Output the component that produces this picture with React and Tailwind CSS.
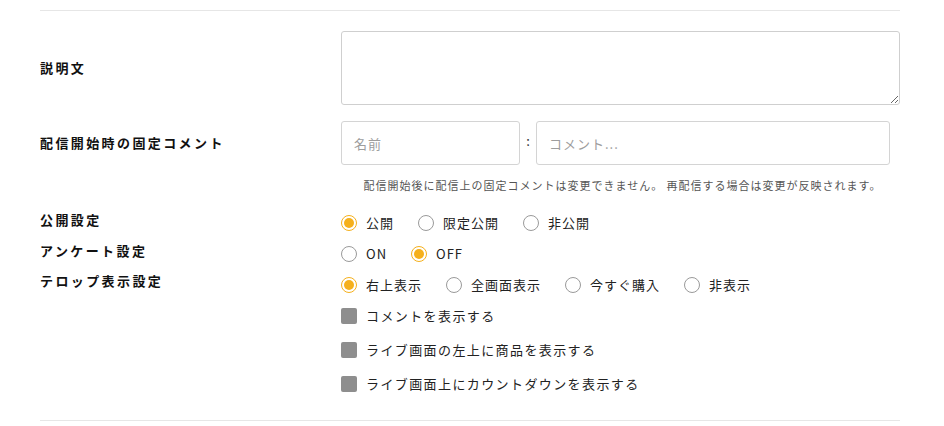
import React from "react";

const font = { fontFamily: '"Noto Sans CJK JP", "Noto Sans", sans-serif' };

const Radio = ({ label, checked }) => (
  <label className="flex items-center mr-[24px]">
    <span
      className={
        checked
          ? "w-4 h-4 rounded-full border border-[#f5b01c] flex items-center justify-center"
          : "w-4 h-4 rounded-full border border-[#9a9a9a]"
      }
    >
      {checked && <span className="w-[10px] h-[10px] rounded-full bg-[#f5b01c]" />}
    </span>
    <span className="ml-[9px] text-[13px] tracking-[1px] text-[#222]">{label}</span>
  </label>
);

const Check = ({ label }) => (
  <label className="flex items-center h-[32px]">
    <span className="w-4 h-4 rounded-[2px] bg-[#8e8e8e]" />
    <span className="ml-[9px] text-[13px] tracking-[1.4px] text-[#222]">{label}</span>
  </label>
);

const Label = ({ children, className = "" }) => (
  <div className={"w-[301px] shrink-0 text-[13px] font-bold tracking-[2.4px] text-[#111] " + className}>
    {children}
  </div>
);

export default function App() {
  return (
    <div className="w-[944px] h-[426px] bg-white pl-10 pr-[44px] pt-[10px]" style={font}>
      <div className="border-t border-[#e6e6e6]">
        {/* 説明文 */}
        <div className="flex items-center mt-5">
          <Label>説明文</Label>
          <textarea className="w-[559px] h-[74px] border border-[#cfcfcf] rounded-[3px] outline-none" />
        </div>

        {/* 固定コメント */}
        <div className="flex items-center mt-4">
          <Label>配信開始時の固定コメント</Label>
          <div className="flex items-center">
            <input
              placeholder="名前"
              className="w-[179px] h-[44px] border border-[#d4d4d4] rounded-[3px] px-3 text-[13px] tracking-[1px] placeholder:text-[#9d9d9d] outline-none"
            />
            <span className="w-4 text-center text-[13px] text-[#333] -mt-1">:</span>
            <input
              placeholder="コメント..."
              className="w-[354px] h-[44px] border border-[#d4d4d4] rounded-[3px] px-3 text-[13px] tracking-[1px] placeholder:text-[#9d9d9d] outline-none"
            />
          </div>
        </div>
        <div className="flex mt-[13px]">
          <div className="w-[301px] shrink-0" />
          <p className="w-[559px] text-center text-[11px] tracking-[1px] text-[#555] leading-[14px] pl-[4px]">
            配信開始後に配信上の固定コメントは変更できません。 再配信する場合は変更が反映されます。
          </p>
        </div>

        {/* 設定 */}
        <div className="mt-[15px]">
          <div className="flex items-center h-[31px]">
            <Label className="mb-[6px]">公開設定</Label>
            <div className="flex">
              <Radio label="公開" checked />
              <Radio label="限定公開" />
              <Radio label="非公開" />
            </div>
          </div>
          <div className="flex items-center h-[31px]">
            <Label className="mb-[6px]">アンケート設定</Label>
            <div className="flex">
              <Radio label="ON" />
              <Radio label="OFF" checked />
            </div>
          </div>
          <div className="flex items-center h-[31px]">
            <Label className="mb-[7px]">テロップ表示設定</Label>
            <div className="flex">
              <Radio label="右上表示" checked />
              <Radio label="全画面表示" />
              <Radio label="今すぐ購入" />
              <Radio label="非表示" />
            </div>
          </div>
          <div className="flex">
            <div className="w-[301px] shrink-0" />
            <div className="flex flex-col gap-[2px]">
              <Check label="コメントを表示する" />
              <Check label="ライブ画面の左上に商品を表示する" />
              <Check label="ライブ画面上にカウントダウンを表示する" />
            </div>
          </div>
        </div>

        <div className="border-t border-[#e6e6e6] mt-5" />
      </div>
    </div>
  );
}
